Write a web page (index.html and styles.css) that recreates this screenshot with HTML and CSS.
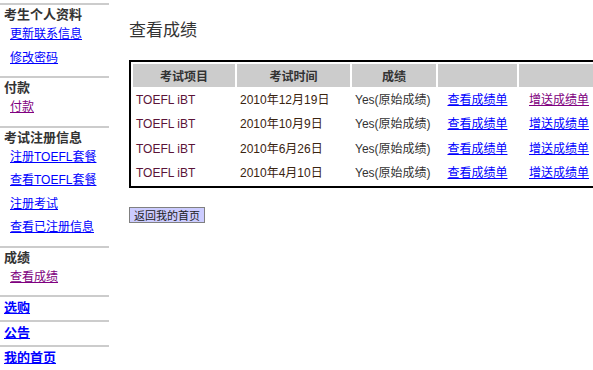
FILE: index.html
```html
<!DOCTYPE html>
<html>
<head>
<meta name="viewport" content="width=device-width, initial-scale=1">
<link rel="stylesheet" href="styles.css">
</head>
<body>

<div class="sidenav">
  <div class="navsec">
    <div class="navhead">考生个人资料</div>
    <a href="#">更新联系信息</a>
    <a href="#">修改密码</a>
  </div>
  <div class="navsec">
    <div class="navhead">付款</div>
    <a href="#" class="visited">付款</a>
  </div>
  <div class="navsec">
    <div class="navhead">考试注册信息</div>
    <a href="#">注册TOEFL套餐</a>
    <a href="#">查看TOEFL套餐</a>
    <a href="#">注册考试</a>
    <a href="#">查看已注册信息</a>
  </div>
  <div class="navsec">
    <div class="navhead">成绩</div>
    <a href="#" class="visited">查看成绩</a>
  </div>
  <div class="navsec single">
    <a href="#">选购</a>
  </div>
  <div class="navsec single">
    <a href="#">公告</a>
  </div>
  <div class="navsec single">
    <a href="#">我的首页</a>
  </div>
</div>

<div class="main">
  <h1>查看成绩</h1>

  <table class="scores">
    <colgroup>
      <col class="c1"><col class="c2"><col class="c3"><col class="c4"><col class="c5">
    </colgroup>
    <tr>
      <th>考试项目</th>
      <th>考试时间</th>
      <th>成绩</th>
      <th></th>
      <th></th>
    </tr>
    <tr>
      <td class="test">TOEFL iBT</td>
      <td class="date">2010年12月19日</td>
      <td>Yes(原始成绩)</td>
      <td class="link"><a href="#">查看成绩单</a></td>
      <td class="link"><a href="#" class="visited">增送成绩单</a></td>
    </tr>
    <tr>
      <td class="test">TOEFL iBT</td>
      <td class="date">2010年10月9日</td>
      <td>Yes(原始成绩)</td>
      <td class="link"><a href="#">查看成绩单</a></td>
      <td class="link"><a href="#">增送成绩单</a></td>
    </tr>
    <tr>
      <td class="test">TOEFL iBT</td>
      <td class="date">2010年6月26日</td>
      <td>Yes(原始成绩)</td>
      <td class="link"><a href="#">查看成绩单</a></td>
      <td class="link"><a href="#">增送成绩单</a></td>
    </tr>
    <tr>
      <td class="test">TOEFL iBT</td>
      <td class="date">2010年4月10日</td>
      <td>Yes(原始成绩)</td>
      <td class="link"><a href="#">查看成绩单</a></td>
      <td class="link"><a href="#">增送成绩单</a></td>
    </tr>
  </table>

  <button class="backbtn">返回我的首页</button>
</div>

</body>
</html>
```

FILE: styles.css
```css
html, body {
  overflow: hidden;
}

body {
  margin: 0;
  background: white;
  font-family: 'Liberation Sans', 'Arial', 'Noto Sans CJK SC', sans-serif;
  font-size: 12px;
  color: #333333;
  display: flex;
  align-items: flex-start;
}

a {
  color: blue;
  text-decoration: underline;
}

a.visited {
  color: purple;
}

/* left menu */
.sidenav {
  width: 109px;
  flex-shrink: 0;
  padding-top: 3px;
}

.navsec {
  border-top: 2px solid #cccccc;
  padding: 2px 0 6px 0;
}

.navhead {
  font-size: 13px;
  font-weight: bold;
  line-height: 16px;
  padding-left: 4px;
  color: #333333;
}

.navsec a {
  display: block;
  font-size: 12px;
  line-height: 15.5px;
  padding: 4px 0 4px 10px;
  width: fit-content;
}

.navsec.single {
  padding: 3px 0 4px 0;
}

.navsec.single a {
  font-size: 13px;
  font-weight: bold;
  line-height: 16px;
  padding: 0 0 0 4px;
}

/* page body */
.main {
  margin-left: 20px;
  padding-top: 20px;
  flex-shrink: 0;
}

h1 {
  font-size: 17px;
  font-weight: normal;
  line-height: 21px;
  margin: 0 0 19px 0;
  color: #333333;
}

.scores {
  border: 2px solid black;
  border-spacing: 2px;
  table-layout: fixed;
  width: 474px;
}

.c1 { width: 102px; }
.c2 { width: 113px; }
.c3 { width: 84px; }
.c4 { width: 79px; }
.c5 { width: 80px; }

.scores th {
  background: #cccccc;
  height: 23px;
  padding: 0;
  font-size: 12px;
  font-weight: bold;
  text-align: center;
  color: #333333;
}

.scores td {
  padding: 3px 0 3px 3px;
  line-height: 16.3px;
  white-space: nowrap;
  text-align: left;
  color: #333333;
}

.scores td.test {
  color: #5a1438;
}

.scores td.date {
  color: #3a2410;
}

.scores td.link {
  text-align: center;
  padding-left: 0;
}

.backbtn {
  display: block;
  margin-top: 19px;
  padding: 0 4px;
  height: 16px;
  line-height: 14px;
  font-family: 'Noto Sans CJK SC', sans-serif;
  font-size: 11px;
  color: #222222;
  background: #ccccff;
  border: 1px solid #808080;
  border-radius: 0;
}
```
